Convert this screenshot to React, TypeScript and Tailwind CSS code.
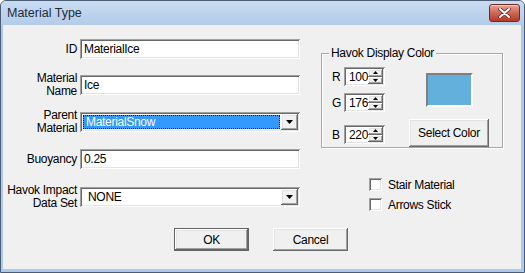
import React from 'react';

// classic win32 bevels
const sunken =
  'shadow-[inset_1px_1px_0_#a0a0a0,inset_-1px_-1px_0_#ffffff,inset_2px_2px_0_#696969,inset_-2px_-2px_0_#e3e3e3]';
const raised =
  'shadow-[inset_-1px_-1px_0_#696969,inset_1px_1px_0_#ffffff,inset_-2px_-2px_0_#a0a0a0,inset_2px_2px_0_#e3e3e3]';

const Arrow = ({ up, w = 7, h = 4 }: { up?: boolean; w?: number; h?: number }) => (
  <svg width={w} height={h} viewBox={`0 0 ${w} ${h}`}>
    <path d={up ? `M${w / 2} 0 L${w} ${h} L0 ${h} Z` : `M0 0 L${w} 0 L${w / 2} ${h} Z`} fill="#000" />
  </svg>
);

const Label = ({ lines }: { lines: string[] }) => (
  <div className="w-[74px] text-right leading-[13px] whitespace-nowrap">
    {lines.map((l) => (
      <div key={l}>{l}</div>
    ))}
  </div>
);

const TextRow = ({ lines, value, className }: { lines: string[]; value: string; className?: string }) => (
  <div className={`flex items-center h-[20px] ${className ?? ''}`}>
    <Label lines={lines} />
    <div className={`ml-[3px] w-[220px] h-[20px] bg-white ${sunken} flex items-center pl-[4px]`}>{value}</div>
  </div>
);

const ComboRow = ({
  lines,
  value,
  selected,
  className,
}: {
  lines: string[];
  value: string;
  selected?: boolean;
  className?: string;
}) => (
  <div className={`flex items-center h-[20px] ${className ?? ''}`}>
    <Label lines={lines} />
    <div className={`ml-[3px] w-[220px] h-[20px] bg-white ${sunken} flex items-center p-[2px]`}>
      <div className="flex-1 h-full py-[1px] pl-[1px] pr-[1px]">
        {selected ? (
          <div className="h-full bg-[#3399ff] text-white border border-dotted border-[#1a1a1a] flex items-center pl-[2px]">
            {value}
          </div>
        ) : (
          <div className="h-full flex items-center pl-[5px]">{value}</div>
        )}
      </div>
      <div className={`w-[17px] h-[16px] bg-[#f0f0f0] ${raised} flex items-center justify-center`}>
        <Arrow />
      </div>
    </div>
  </div>
);

const Spin = ({ label, value, className }: { label: string; value: string; className?: string }) => (
  <div className={`flex items-center h-[19px] ${className ?? ''}`}>
    <span className="w-[12px]">{label}</span>
    <div className={`w-[41px] h-[19px] bg-white ${sunken} flex p-[2px]`}>
      <div className="flex-1 flex items-center pl-[3px]">{value}</div>
      <div className="w-[15px] flex flex-col">
        <div className={`flex-1 bg-[#f0f0f0] ${raised} flex items-center justify-center`}>
          <Arrow up w={5} h={3} />
        </div>
        <div className={`flex-1 bg-[#f0f0f0] ${raised} flex items-center justify-center`}>
          <Arrow w={5} h={3} />
        </div>
      </div>
    </div>
  </div>
);

const Check = ({ label, className }: { label: string; className?: string }) => (
  <div className={`flex items-center h-[13px] ${className ?? ''}`}>
    <div className={`w-[13px] h-[13px] bg-white ${sunken}`} />
    <span className="ml-[6px]">{label}</span>
  </div>
);

const Button = ({ children, isDefault, className }: { children: React.ReactNode; isDefault?: boolean; className?: string }) => (
  <div
    className={`h-[23px] w-[75px] bg-[#f0f0f0] flex items-center justify-center ${
      isDefault ? 'border border-[#646464]' : ''
    } ${className ?? ''}`}
  >
    <div className={`w-full h-full ${raised} flex items-center justify-center`}>{children}</div>
  </div>
);

export default function App() {
  return (
    <div className="w-[525px] h-[273px] bg-[#aec9e9] border border-[#4a5d75] rounded-t-[6px] flex flex-col font-['Liberation_Sans',Arial,sans-serif] text-[12px] tracking-[-0.3px] text-black overflow-hidden">
      {/* title bar */}
      <div className="h-[24px] shrink-0 bg-linear-to-b from-[#c9dcf1] to-[#b4cce9] flex items-center pl-[6px] pr-[4px]">
        <span className="text-[12.5px] tracking-normal text-[#1e2a3a]">Material Type</span>
        <div className="ml-auto w-[31px] h-[18px] rounded-[3px] border border-[#6e2b25] bg-linear-to-b from-[#e7a497] via-[#cf6654] to-[#b8382a] flex items-center justify-center shadow-[inset_0_1px_0_#f3c8bf]">
          <svg width="13" height="10" viewBox="0 0 13 10">
            <path d="M2 1 L11 9 M11 1 L2 9" stroke="#6b2a22" strokeWidth="3.6" strokeLinecap="round" />
            <path d="M2 1 L11 9 M11 1 L2 9" stroke="#ffffff" strokeWidth="2" strokeLinecap="round" />
          </svg>
        </div>
      </div>

      {/* client area */}
      <div className="flex-1 ml-[2px] mr-[3px] mb-[3px] bg-[#f0f0f0] flex flex-col">
        <div className="flex">
          <div className="flex flex-col pt-[14px]">
            <TextRow lines={['ID']} value="MaterialIce" />
            <TextRow lines={['Material', 'Name']} value="Ice" className="mt-[16px]" />
            <ComboRow lines={['Parent', 'Material']} value="MaterialSnow" selected className="mt-[17px]" />
            <TextRow lines={['Buoyancy']} value="0.25" className="mt-[17px]" />
            <ComboRow lines={['Havok Impact', 'Data Set']} value="NONE" className="mt-[18px]" />
          </div>

          <div className="ml-[21px] flex flex-col">
            <div className="relative mt-[28px] w-[182px] h-[95px] border border-[#a9a9a9] shadow-[inset_1px_1px_0_#ffffff,1px_1px_0_#ffffff] flex">
              <span className="absolute -top-[7px] left-[7px] px-[2px] bg-[#f0f0f0] leading-[13px]">
                Havok Display Color
              </span>
              <div className="ml-[10px] mt-[13px] flex flex-col">
                <Spin label="R" value="100" />
                <Spin label="G" value="176" className="mt-[7px]" />
                <Spin label="B" value="220" className="mt-[13px]" />
              </div>
              <div className="ml-[24px] w-[80px] flex flex-col items-center">
                <div className="mt-[19px] w-[47px] h-[34px] bg-[#64b0dc] border-[2px] border-t-[#808080] border-l-[#808080] border-b-white border-r-white" />
                <Button className="mt-[12px] !w-[80px] !h-[28px]">Select Color</Button>
              </div>
            </div>
            <Check label="Stair Material" className="mt-[30px] ml-[48px]" />
            <Check label="Arrows Stick" className="mt-[7px] ml-[48px]" />
          </div>
        </div>

        <div className="flex mt-[17px] ml-[171px]">
          <Button isDefault>OK</Button>
          <Button className="ml-[24px]">Cancel</Button>
        </div>
      </div>
    </div>
  );
}
